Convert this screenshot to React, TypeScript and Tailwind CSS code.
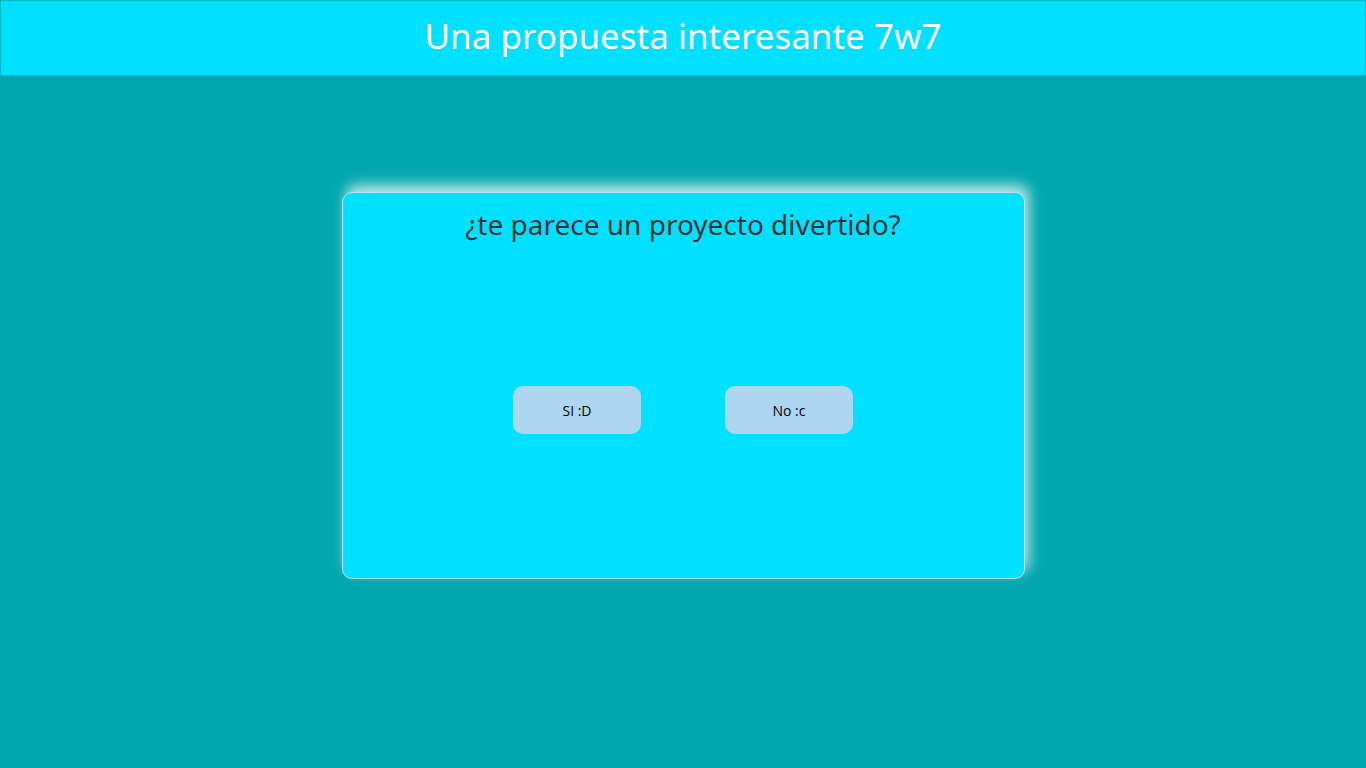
export default function App() {
  return (
    <div className="min-h-screen w-full bg-[#00a6ae] flex flex-col" style={{ fontFamily: '"Noto Sans", "Open Sans", sans-serif' }}>
      {/* Header */}
      <header className="h-[76px] bg-[#00e1ff] border border-[#00b8c4] flex items-center justify-center">
        <h1 className="text-[35px] text-white font-normal leading-none -mt-[6px]">Una propuesta interesante 7w7</h1>
      </header>

      {/* Card */}
      <div className="flex justify-center pt-[116px]">
        <div className="w-[683px] h-[387px] bg-[#00e1ff] border border-[#b4e4ee] rounded-[10px] shadow-[4px_-7px_14px_rgba(255,255,255,0.75)] flex flex-col items-center">
          <h2 className="mt-[14px] text-[28px] text-[#333333] leading-tight">¿te parece un proyecto divertido?</h2>
          <div className="flex gap-[84px] mt-[144px]">
            <button className="w-[128px] h-[48px] rounded-[10px] bg-[#aed6f1] text-[14px] text-black" style={{ fontFamily: '"Open Sans", "Liberation Sans", sans-serif' }}>
              SI :D
            </button>
            <button className="w-[128px] h-[48px] rounded-[10px] bg-[#aed6f1] text-[14px] text-black" style={{ fontFamily: '"Open Sans", "Liberation Sans", sans-serif' }}>
              No :c
            </button>
          </div>
        </div>
      </div>
    </div>
  );
}
